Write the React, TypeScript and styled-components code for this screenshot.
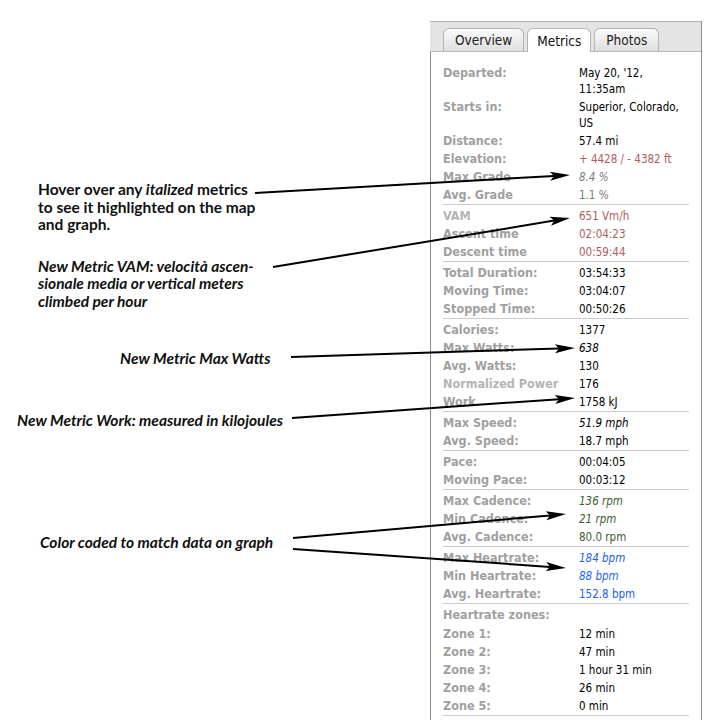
import React from "react";
import styled, { createGlobalStyle, css } from "styled-components";

const GlobalStyle = createGlobalStyle`
  html, body { margin: 0; padding: 0; background: #ffffff; }
  body { font-family: "DejaVu Sans Condensed", "DejaVu Sans", sans-serif; }
`;

type Tone = "black" | "red" | "gray" | "green" | "blue";

interface Metric {
  label: string;
  value: string;
  tone?: Tone;
  italic?: boolean;
  faint?: boolean;
}

interface Group {
  heading?: string;
  rows: Metric[];
}

const groups: Group[] = [
  {
    rows: [
      { label: "Departed:", value: "May 20, '12, 11:35am" },
      { label: "Starts in:", value: "Superior, Colorado, US" },
      { label: "Distance:", value: "57.4 mi" },
      { label: "Elevation:", value: "+ 4428 / - 4382 ft", tone: "red" },
      { label: "Max Grade", value: "8.4 %", tone: "gray", italic: true },
      { label: "Avg. Grade", value: "1.1 %", tone: "gray" },
    ],
  },
  {
    rows: [
      { label: "VAM", value: "651 Vm/h", tone: "red", faint: true },
      { label: "Ascent time", value: "02:04:23", tone: "red" },
      { label: "Descent time", value: "00:59:44", tone: "red" },
    ],
  },
  {
    rows: [
      { label: "Total Duration:", value: "03:54:33" },
      { label: "Moving Time:", value: "03:04:07" },
      { label: "Stopped Time:", value: "00:50:26" },
    ],
  },
  {
    rows: [
      { label: "Calories:", value: "1377" },
      { label: "Max Watts:", value: "638", italic: true },
      { label: "Avg. Watts:", value: "130" },
      { label: "Normalized Power", value: "176", faint: true },
      { label: "Work", value: "1758 kJ" },
    ],
  },
  {
    rows: [
      { label: "Max Speed:", value: "51.9 mph", italic: true },
      { label: "Avg. Speed:", value: "18.7 mph" },
    ],
  },
  {
    rows: [
      { label: "Pace:", value: "00:04:05" },
      { label: "Moving Pace:", value: "00:03:12" },
    ],
  },
  {
    rows: [
      { label: "Max Cadence:", value: "136 rpm", tone: "green", italic: true },
      { label: "Min Cadence:", value: "21 rpm", tone: "green", italic: true },
      { label: "Avg. Cadence:", value: "80.0 rpm", tone: "green" },
    ],
  },
  {
    rows: [
      { label: "Max Heartrate:", value: "184 bpm", tone: "blue", italic: true },
      { label: "Min Heartrate:", value: "88 bpm", tone: "blue", italic: true },
      { label: "Avg. Heartrate:", value: "152.8 bpm", tone: "blue" },
    ],
  },
  {
    heading: "Heartrate zones:",
    rows: [
      { label: "Zone 1:", value: "12 min" },
      { label: "Zone 2:", value: "47 min" },
      { label: "Zone 3:", value: "1 hour 31 min" },
      { label: "Zone 4:", value: "26 min" },
      { label: "Zone 5:", value: "0 min" },
    ],
  },
];

const toneColors: Record<Tone, string> = {
  black: "#000000",
  red: "#b25c5c",
  gray: "#7a7a7a",
  green: "#3c5f2c",
  blue: "#1a62e8",
};

const Page = styled.div`
  position: relative;
  width: 720px;
  height: 720px;
  display: flex;
  overflow: hidden;
  background: #ffffff;
`;

const Notes = styled.div`
  width: 430px;
  flex: none;
  display: flex;
  flex-direction: column;
`;

const Note = styled.p<{ $top: number; $indent: number; $italic?: boolean }>`
  margin: ${(p) => p.$top}px 0 0 ${(p) => p.$indent}px;
  font-family: Lato, "Open Sans", sans-serif;
  font-weight: 700;
  font-size: 15.5px;
  line-height: 17.5px;
  color: #111111;
  white-space: nowrap;
  ${(p) =>
    p.$italic &&
    css`
      font-style: italic;
    `}
`;

const Panel = styled.div`
  width: 270px;
  flex: none;
  margin-top: 21px;
  border-left: 1px solid #8c8c8c;
  border-right: 1px solid #8c8c8c;
  display: flex;
  flex-direction: column;
`;

const TabStrip = styled.div`
  height: 29px;
  background: #e4e4e4;
  border-top: 1px solid #b4b4b4;
  border-bottom: 1px solid #b8b8b8;
  margin-left: -1px;
  display: flex;
  align-items: flex-end;
  gap: 3px;
  padding-left: 13px;
`;

const Tab = styled.div<{ $active?: boolean }>`
  height: 22px;
  padding: 0 11px;
  display: flex;
  align-items: center;
  font-size: 13.5px;
  color: #222222;
  border: 1px solid #b4b4b4;
  border-bottom: none;
  border-radius: 6px 6px 0 0;
  background: linear-gradient(#fbfbfb, #dedede);
  ${(p) =>
    p.$active &&
    css`
      background: #ffffff;
      height: 23px;
      margin-bottom: -1px;
      padding: 0 9px;
      color: #111111;
    `}
`;

const Body = styled.div`
  padding: 10px 12px 0 12px;
  display: flex;
  flex-direction: column;
`;

const GroupBox = styled.div`
  padding-top: 2px;
  border-bottom: 1px solid #cccccc;
`;

const Row = styled.div`
  display: grid;
  grid-template-columns: 136px 1fr;
  padding: 1px 0 1px;
  line-height: 16px;
`;

const Heading = styled.div`
  padding: 1px 0 1px;
  margin-bottom: 1px;
  line-height: 16px;
  font-size: 12.5px;
  font-weight: 700;
  color: #a0a0a0;
`;

const Label = styled.span<{ $faint?: boolean }>`
  font-size: 12.5px;
  font-weight: 700;
  color: ${(p) => (p.$faint ? "#b4b4b4" : "#a0a0a0")};
  white-space: nowrap;
`;

const Value = styled.span<{ $tone: Tone; $italic?: boolean }>`
  font-size: 11.5px;
  color: ${(p) => toneColors[p.$tone]};
  font-style: ${(p) => (p.$italic ? "italic" : "normal")};
  white-space: pre-wrap;
`;

const Overlay = styled.svg`
  position: absolute;
  left: 0;
  top: 0;
  width: 720px;
  height: 720px;
  pointer-events: none;
`;

type Seg = [number, number, number, number];

const arrows: Seg[] = [
  [255, 193, 570, 175],
  [273, 267, 570, 218],
  [291, 357, 575, 348],
  [292, 418, 575, 398],
  [293, 538, 566, 514],
  [293, 549, 566, 568],
];

function Arrow({ seg }: { seg: Seg }) {
  const [x1, y1, x2, y2] = seg;
  const dx = x2 - x1;
  const dy = y2 - y1;
  const len = Math.hypot(dx, dy);
  const ux = dx / len;
  const uy = dy / len;
  const L = 20;
  const W = 4.5;
  const bx = x2 - ux * L;
  const by = y2 - uy * L;
  const nx = -uy;
  const ny = ux;
  const pts = `${x2},${y2} ${bx + nx * W},${by + ny * W} ${bx + ux * 4},${by + uy * 4} ${bx - nx * W},${by - ny * W}`;
  return (
    <g>
      <line x1={x1} y1={y1} x2={bx + ux * 4} y2={by + uy * 4} stroke="#000" strokeWidth={2} />
      <polygon points={pts} fill="#000" />
    </g>
  );
}

export default function App() {
  return (
    <>
      <GlobalStyle />
      <Page>
        <Notes>
          <Note $top={181} $indent={38}>
            Hover over any <i>italized</i> metrics
            <br />
            to see it highlighted on the map
            <br />
            and graph.
          </Note>
          <Note $top={24} $indent={38} $italic>
            New Metric VAM: velocità ascen-
            <br />
            sionale media or vertical meters
            <br />
            climbed per hour
          </Note>
          <Note $top={40} $indent={120} $italic>
            New Metric Max Watts
          </Note>
          <Note $top={44} $indent={17} $italic>
            New Metric Work: measured in kilojoules
          </Note>
          <Note $top={105} $indent={40} $italic>
            Color coded to match data on graph
          </Note>
        </Notes>
        <Panel>
          <TabStrip>
            <Tab>Overview</Tab>
            <Tab $active>Metrics</Tab>
            <Tab>Photos</Tab>
          </TabStrip>
          <Body>
            {groups.map((g, gi) => (
              <GroupBox key={gi}>
                {g.heading && <Heading>{g.heading}</Heading>}
                {g.rows.map((r) => (
                  <Row key={r.label}>
                    <Label $faint={r.faint}>{r.label}</Label>
                    <Value $tone={r.tone ?? "black"} $italic={r.italic}>
                      {r.value}
                    </Value>
                  </Row>
                ))}
              </GroupBox>
            ))}
          </Body>
        </Panel>
        <Overlay viewBox="0 0 720 720">
          {arrows.map((s, i) => (
            <Arrow key={i} seg={s} />
          ))}
        </Overlay>
      </Page>
    </>
  );
}
